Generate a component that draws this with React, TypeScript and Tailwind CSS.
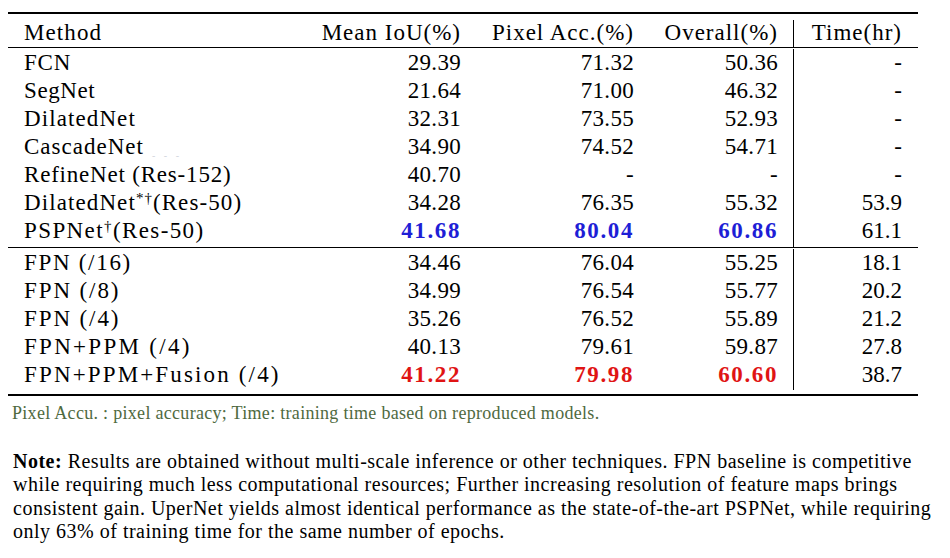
import React from "react";

type Cell = { v: string; c?: "blue" | "red" };
type Row = { name: React.ReactNode; tr: string; miou: Cell; acc: Cell; overall: Cell; time: string };

const cols = "grid grid-cols-[292px_177px_173px_143px_125px]";

const topRows: Row[] = [
  { name: "FCN", tr: "tracking-[0.8px]", miou: { v: "29.39" }, acc: { v: "71.32" }, overall: { v: "50.36" }, time: "-" },
  { name: "SegNet", tr: "tracking-[0.6px]", miou: { v: "21.64" }, acc: { v: "71.00" }, overall: { v: "46.32" }, time: "-" },
  { name: "DilatedNet", tr: "tracking-[1.1px]", miou: { v: "32.31" }, acc: { v: "73.55" }, overall: { v: "52.93" }, time: "-" },
  {
    name: (
      <span className="relative">
        CascadeNet
        <span className="absolute left-[128px] top-[8px] text-[10px] tracking-[3px] text-gray-300">- - -</span>
      </span>
    ),
    tr: "tracking-[1px]",
    miou: { v: "34.90" },
    acc: { v: "74.52" },
    overall: { v: "54.71" },
    time: "-",
  },
  {
    name: "RefineNet (Res-152)",
    tr: "tracking-[0.8px]",
    miou: { v: "40.70" },
    acc: { v: "-" },
    overall: { v: "-" },
    time: "-",
  },
  {
    name: (
      <>
        DilatedNet<sup className="text-[15px] tracking-[1px]">*†</sup>(Res-50)
      </>
    ),
    tr: "tracking-[1.1px]",
    miou: { v: "34.28" },
    acc: { v: "76.35" },
    overall: { v: "55.32" },
    time: "53.9",
  },
  {
    name: (
      <>
        PSPNet<sup className="text-[15px]">†</sup>(Res-50)
      </>
    ),
    tr: "tracking-[1.4px]",
    miou: { v: "41.68", c: "blue" },
    acc: { v: "80.04", c: "blue" },
    overall: { v: "60.86", c: "blue" },
    time: "61.1",
  },
];

const fpnRows: Row[] = [
  { name: "FPN (/16)", tr: "tracking-[1.7px]", miou: { v: "34.46" }, acc: { v: "76.04" }, overall: { v: "55.25" }, time: "18.1" },
  { name: "FPN (/8)", tr: "tracking-[1.9px]", miou: { v: "34.99" }, acc: { v: "76.54" }, overall: { v: "55.77" }, time: "20.2" },
  { name: "FPN (/4)", tr: "tracking-[1.9px]", miou: { v: "35.26" }, acc: { v: "76.52" }, overall: { v: "55.89" }, time: "21.2" },
  { name: "FPN+PPM (/4)", tr: "tracking-[2.3px]", miou: { v: "40.13" }, acc: { v: "79.61" }, overall: { v: "59.87" }, time: "27.8" },
  {
    name: "FPN+PPM+Fusion (/4)",
    tr: "tracking-[2.15px]",
    miou: { v: "41.22", c: "red" },
    acc: { v: "79.98", c: "red" },
    overall: { v: "60.60", c: "red" },
    time: "38.7",
  },
];

function Num({ cell, pr = "pr-4" }: { cell: Cell; pr?: string }) {
  const color =
    cell.c === "blue"
      ? "text-[#1e1ed6] font-bold tracking-[1.6px]"
      : cell.c === "red"
      ? "text-[#e01414] font-bold tracking-[1.6px]"
      : "tracking-[0.3px]";
  return (
    <div className={`flex items-center justify-end ${pr}`}>
      <span className={color}>{cell.v}</span>
    </div>
  );
}

function TableRow({ row }: { row: Row }) {
  return (
    <div className={`${cols} h-[28px] pt-[1px] leading-[28px]`}>
      <div className={`pl-4 whitespace-nowrap ${row.tr}`}>{row.name}</div>
      <Num cell={row.miou} />
      <Num cell={row.acc} />
      <Num cell={row.overall} pr="pr-[15px]" />
      <div className="flex items-center justify-end pr-4 border-l border-black">{row.time}</div>
    </div>
  );
}

function Spacer({ h }: { h: string }) {
  return (
    <div className={`${cols} ${h}`}>
      <div />
      <div />
      <div />
      <div />
      <div className="border-l border-black" />
    </div>
  );
}

export default function App() {
  return (
    <div className="w-[950px] h-[558px] bg-white text-black overflow-hidden font-['Liberation_Serif'] text-[23px]">
      {/* Results table */}
      <div className="ml-[8px] mt-[12px] w-[910px] border-t-2 border-black">
        <div className={`${cols} h-[34px] border-b border-black leading-[28px] tracking-[1px]`}>
          <div className="pl-4 pt-[3px] flex items-center tracking-[1.1px]">Method</div>
          <div className="pr-4 pt-[3px] flex items-center justify-end">Mean IoU(%)</div>
          <div className="pr-4 pt-[3px] flex items-center justify-end">Pixel Acc.(%)</div>
          <div className="pr-[15px] pt-[3px] flex items-center justify-end">Overall(%)</div>
          <div className="mt-[6px] h-[28px] pb-[3px] pr-4 flex items-center justify-end border-l border-black">
            Time(hr)
          </div>
        </div>

        <div className="border-b border-black">
          {topRows.map((r, i) => (
            <TableRow key={i} row={r} />
          ))}
          <Spacer h="h-[3px]" />
        </div>

        <div className="border-b-2 border-black">
          {fpnRows.map((r, i) => (
            <TableRow key={i} row={r} />
          ))}
          <Spacer h="h-[2px]" />
          <div className="h-[4px]" />
        </div>
      </div>

      {/* Footnote */}
      <p className="ml-[12px] mt-[4px] text-[18px] leading-[26px] text-[#4f6a3f] tracking-[0.3px]">
        Pixel Accu. : pixel accuracy; Time: training time based on reproduced models.
      </p>

      {/* Note */}
      <div className="ml-[13px] mt-[24px] text-[20px] leading-[23.3px] whitespace-nowrap tracking-[0.5px]">
        <div>
          <b>Note:</b> Results are obtained without multi-scale inference or other techniques. FPN baseline is competitive
        </div>
        <div>while requiring much less computational resources; Further increasing resolution of feature maps brings</div>
        <div>consistent gain. UperNet yields almost identical performance as the state-of-the-art PSPNet, while requiring</div>
        <div>only 63% of training time for the same number of epochs.</div>
      </div>
    </div>
  );
}
